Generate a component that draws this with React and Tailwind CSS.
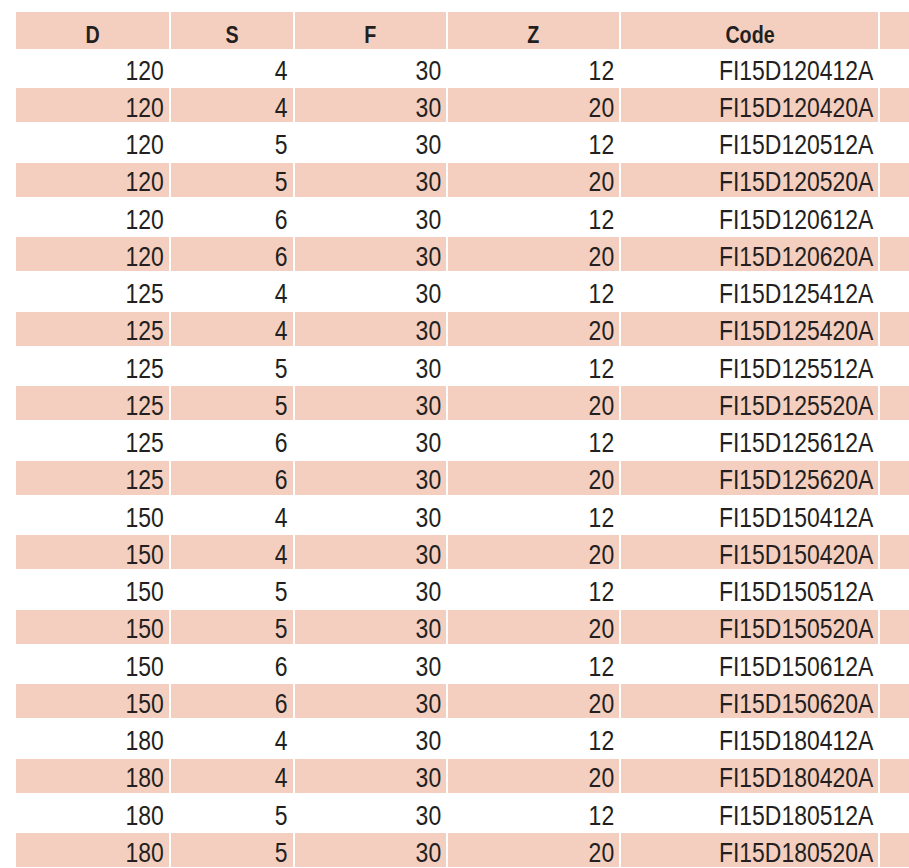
import React from "react";

const rows = [
  [120, 4, 30, 12, "FI15D120412A"],
  [120, 4, 30, 20, "FI15D120420A"],
  [120, 5, 30, 12, "FI15D120512A"],
  [120, 5, 30, 20, "FI15D120520A"],
  [120, 6, 30, 12, "FI15D120612A"],
  [120, 6, 30, 20, "FI15D120620A"],
  [125, 4, 30, 12, "FI15D125412A"],
  [125, 4, 30, 20, "FI15D125420A"],
  [125, 5, 30, 12, "FI15D125512A"],
  [125, 5, 30, 20, "FI15D125520A"],
  [125, 6, 30, 12, "FI15D125612A"],
  [125, 6, 30, 20, "FI15D125620A"],
  [150, 4, 30, 12, "FI15D150412A"],
  [150, 4, 30, 20, "FI15D150420A"],
  [150, 5, 30, 12, "FI15D150512A"],
  [150, 5, 30, 20, "FI15D150520A"],
  [150, 6, 30, 12, "FI15D150612A"],
  [150, 6, 30, 20, "FI15D150620A"],
  [180, 4, 30, 12, "FI15D180412A"],
  [180, 4, 30, 20, "FI15D180420A"],
  [180, 5, 30, 12, "FI15D180512A"],
  [180, 5, 30, 20, "FI15D180520A"],
];

const headers = ["D", "S", "F", "Z", "Code", ""];

// column widths match the printed catalogue table
const grid = "grid grid-cols-[153px_122px_151px_171px_257px_60px] gap-x-[2px]";

const App = () => {
  return (
    <div
      className="w-[909px] h-[868px] overflow-hidden bg-white pt-[12px] pl-[16px] text-[#231f20]"
      style={{ fontFamily: '"Liberation Sans", Arial, sans-serif' }}
    >
      {/* Header */}
      <div className={grid}>
        {headers.map((h, i) => (
          <div
            key={i}
            className="h-[37px] bg-[#f4cfc0] flex items-center justify-center pt-[8px] text-[24px] font-bold leading-none"
          >
            {/* condensed face isn't available, squeeze the regular one */}
            <span className="inline-block scale-x-[0.82] origin-center">{h}</span>
          </div>
        ))}
      </div>

      {/* Rows */}
      <div className="mt-[2px] flex flex-col gap-y-[3.25px]">
        {rows.map((row, r) => {
          const bg = r % 2 === 1 ? "bg-[#f4cfc0]" : "bg-white";
          return (
            <div key={r} className={grid}>
              {row.map((v, c) => (
                <div
                  key={c}
                  className={`h-[34px] ${bg} flex items-center justify-end pt-[5px] pr-[5px] text-[28px] leading-none`}
                >
                  <span className="inline-block scale-x-[0.82] origin-right">{v}</span>
                </div>
              ))}
              <div className={`h-[34px] ${bg}`} />
            </div>
          );
        })}
      </div>
    </div>
  );
};

export default App;
